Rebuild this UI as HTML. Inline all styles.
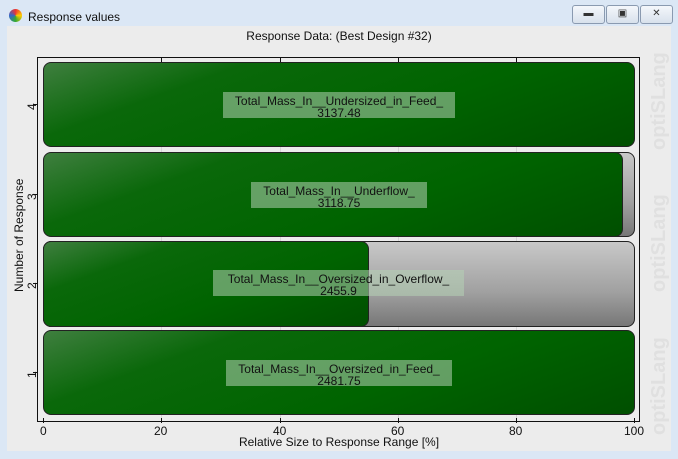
<!DOCTYPE html><html><head><style>
body{margin:0;width:678px;height:459px;background:#dbe7f5;font-family:"Liberation Sans",sans-serif;position:relative;overflow:hidden}
.abs{position:absolute}
.panel{left:7px;top:26px;width:664px;height:425px;background:#ececec}
.bar{position:absolute;border:1px solid #222;border-radius:8px;box-sizing:border-box}
.g{background:linear-gradient(160deg,#3f7f3f 0%,#0a680a 25%,#006400 60%,#004f00 100%)}
.gr{background:linear-gradient(180deg,#c8c8c8,#a0a0a0 60%,#777)}
.lab{position:absolute;background:rgba(180,210,180,0.55);font-size:12px;line-height:12px;text-align:center;color:#111;padding-top:3px;box-sizing:border-box}
.t{position:absolute;font-size:12px;color:#111}
.wm{position:absolute;left:648px;width:30px;transform:rotate(-90deg);transform-origin:0 0;font-size:20px;font-weight:bold;color:#e0e0e0;white-space:nowrap}
.btn{position:absolute;top:5px;height:17px;border:1px solid #8a9ab0;border-radius:3px;background:linear-gradient(#f4f7fb,#d8e1ec);font-size:10px;text-align:center;line-height:16px;color:#333}
</style></head><body>
<div class="abs" style="left:9px;top:9px;width:13px;height:13px;border-radius:50%;background:conic-gradient(#e33,#fc0,#3a3,#36c,#e33)"></div>
<div class="t" style="left:28px;top:10px;">Response values</div>
<div class="btn" style="left:572px;width:31px;">▬</div>
<div class="btn" style="left:606px;width:31px;">▣</div>
<div class="btn" style="left:640px;width:31px;">✕</div>
<div class="abs panel"></div>
<div class="t" style="left:0;width:678px;text-align:center;top:29px;">Response Data: (Best Design #32)</div>
<div class="wm" style="top:150px">optiSLang</div>
<div class="wm" style="top:292px">optiSLang</div>
<div class="wm" style="top:435px">optiSLang</div>
<div class="abs" style="left:37px;top:57px;width:603px;height:365px;border:1px solid #111;background:#ececec;box-sizing:border-box"></div>
<div class="abs" style="left:161px;top:58px;width:1px;height:363px;background:#d6d6d6"></div>
<div class="abs" style="left:280px;top:58px;width:1px;height:363px;background:#d6d6d6"></div>
<div class="abs" style="left:398px;top:58px;width:1px;height:363px;background:#d6d6d6"></div>
<div class="abs" style="left:516px;top:58px;width:1px;height:363px;background:#d6d6d6"></div>
<div class="abs" style="left:161px;top:57px;width:1px;height:5px;background:#111"></div>
<div class="abs" style="left:280px;top:57px;width:1px;height:5px;background:#111"></div>
<div class="abs" style="left:398px;top:57px;width:1px;height:5px;background:#111"></div>
<div class="abs" style="left:516px;top:57px;width:1px;height:5px;background:#111"></div>
<div class="abs" style="left:43px;top:418px;width:1px;height:5px;background:#111"></div>
<div class="abs" style="left:161px;top:418px;width:1px;height:5px;background:#111"></div>
<div class="abs" style="left:280px;top:418px;width:1px;height:5px;background:#111"></div>
<div class="abs" style="left:398px;top:418px;width:1px;height:5px;background:#111"></div>
<div class="abs" style="left:516px;top:418px;width:1px;height:5px;background:#111"></div>
<div class="abs" style="left:634px;top:418px;width:1px;height:5px;background:#111"></div>
<div class="abs" style="left:33px;top:104px;width:5px;height:1px;background:#111"></div>
<div class="abs" style="left:33px;top:194px;width:5px;height:1px;background:#111"></div>
<div class="abs" style="left:33px;top:283px;width:5px;height:1px;background:#111"></div>
<div class="abs" style="left:33px;top:372px;width:5px;height:1px;background:#111"></div>
<div class="bar g" style="left:43px;top:62px;width:592px;height:85px"></div>
<div class="bar gr" style="left:600px;top:152px;width:35px;height:85px"></div>
<div class="bar g" style="left:43px;top:152px;width:580px;height:85px"></div>
<div class="bar gr" style="left:43px;top:241px;width:592px;height:86px"></div>
<div class="bar g" style="left:43px;top:241px;width:326px;height:86px"></div>
<div class="bar g" style="left:43px;top:330px;width:592px;height:85px"></div>
<div class="lab" style="left:223px;top:92px;width:232px;height:26px">Total_Mass_In__Undersized_in_Feed_<br>3137.48</div>
<div class="lab" style="left:251px;top:182px;width:176px;height:26px">Total_Mass_In__Underflow_<br>3118.75</div>
<div class="lab" style="left:213px;top:270px;width:251px;height:26px">Total_Mass_In__Oversized_in_Overflow_<br>2455.9</div>
<div class="lab" style="left:226px;top:360px;width:226px;height:26px">Total_Mass_In__Oversized_in_Feed_<br>2481.75</div>
<div class="t" style="left:40px;top:424px">0</div>
<div class="t" style="left:154px;top:424px">20</div>
<div class="t" style="left:273px;top:424px">40</div>
<div class="t" style="left:391px;top:424px">60</div>
<div class="t" style="left:509px;top:424px">80</div>
<div class="t" style="left:624px;top:424px">100</div>
<div class="t" style="left:0;width:678px;text-align:center;top:435px">Relative Size to Response Range [%]</div>
<div class="t" style="left:25px;top:378px;transform:rotate(-90deg);transform-origin:0 0">1</div>
<div class="t" style="left:25px;top:289px;transform:rotate(-90deg);transform-origin:0 0">2</div>
<div class="t" style="left:25px;top:200px;transform:rotate(-90deg);transform-origin:0 0">3</div>
<div class="t" style="left:25px;top:110px;transform:rotate(-90deg);transform-origin:0 0">4</div>
<div class="t" style="left:12px;top:292px;transform:rotate(-90deg);transform-origin:0 0;white-space:nowrap">Number of Response</div>
</body></html>
